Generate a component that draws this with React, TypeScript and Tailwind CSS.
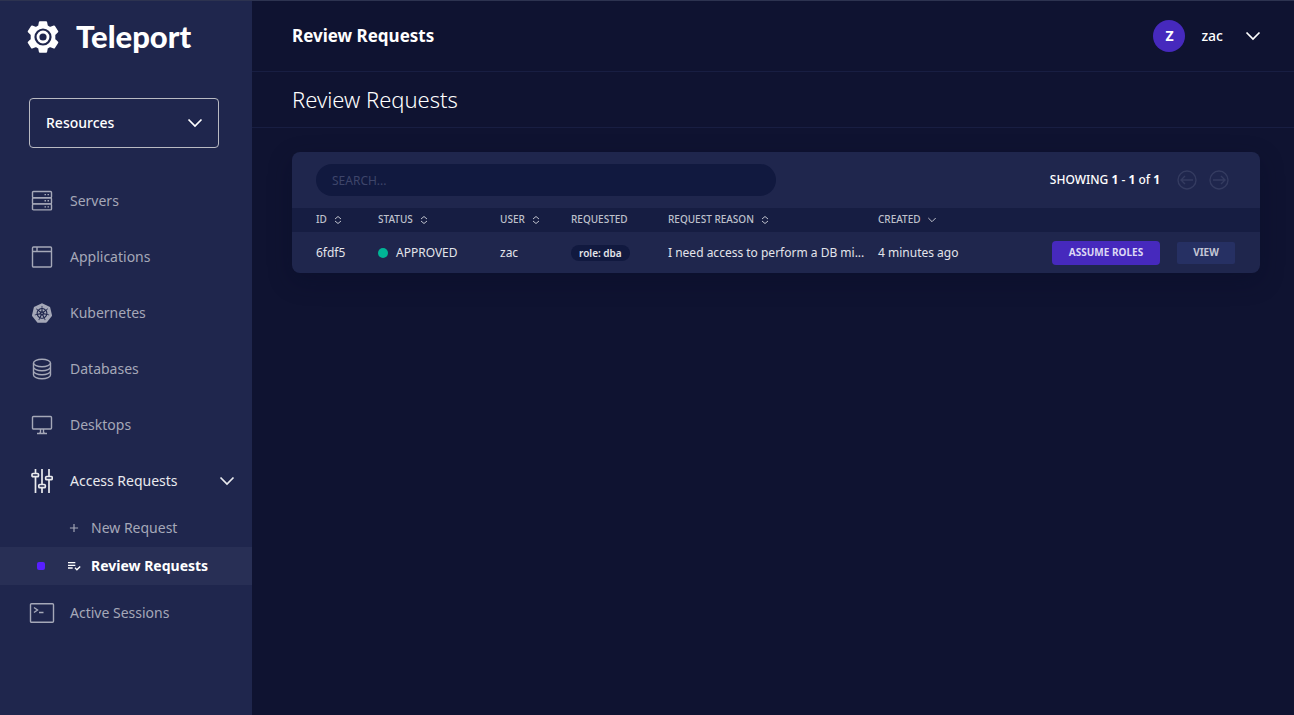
import type { ReactNode, SVGProps } from "react";
import { SiKubernetes } from "react-icons/si";
import { MdPlaylistAddCheck, MdAdd } from "react-icons/md";

function Line({ children, ...props }: SVGProps<SVGSVGElement> & { children: ReactNode }) {
  return (
    <svg fill="none" stroke="currentColor" strokeWidth="1.4" aria-hidden="true" {...props}>
      {children}
    </svg>
  );
}

function Logo() {
  return (
    <svg width="34" height="34" viewBox="0 0 34 34" aria-hidden="true">
      <path
        d="M13.9 2.200h6.200l.8 4 3.200 1.800 4-1.600 3.200 5.200-3 3v4.800l3 3-3.200 5.200-4-1.600-3.200 1.800-.8 4h-6.200l-.8-4-3.200-1.800-4 1.600-3.200-5.200 3-3v-4.800l-3-3 3.200-5.200 4 1.600 3.200-1.800z"
        fill="#fff"
        stroke="#fff"
        strokeWidth="2"
        strokeLinejoin="round"
      />
      <circle cx="17" cy="17" r="8.600" fill="#1f264d" />
      <circle cx="17" cy="17" r="5" fill="none" stroke="#fff" strokeWidth="2.800" />
    </svg>
  );
}

function Chevron({ className }: { className?: string }) {
  return (
    <Line width="16" height="16" viewBox="0 0 16 16" strokeWidth="1.7" className={className}>
      <path d="M1.5 4.5 8 11l6.500-6.500" />
    </Line>
  );
}

function ServersIcon() {
  return (
    <Line width="22" height="22" viewBox="0 0 22 22">
      <rect x="1.500" y="1.500" width="19" height="6.200" rx="1" />
      <rect x="1.500" y="7.700" width="19" height="6.200" rx="1" />
      <rect x="1.500" y="13.900" width="19" height="6" rx="1" />
      <path d="M13.500 4.600H15M16.500 4.600H18M13.500 10.800H15M16.500 10.800H18M13.500 16.900H15M16.500 16.900H18" />
    </Line>
  );
}

function ApplicationsIcon() {
  return (
    <Line width="22" height="22" viewBox="0 0 22 22">
      <rect x="1.500" y="1" width="19" height="20" rx="1" />
      <path d="M1.500 5.500h19M6 1v4.500" />
    </Line>
  );
}

function DatabasesIcon() {
  return (
    <Line width="22" height="22" viewBox="0 0 22 22">
      <ellipse cx="11" cy="5" rx="8.500" ry="3.800" />
      <path d="M2.500 5v12c0 2.100 3.800 3.800 8.500 3.800s8.500-1.700 8.500-3.800V5M2.500 9c0 2.100 3.800 3.800 8.500 3.800s8.500-1.700 8.500-3.800M2.500 13c0 2.100 3.800 3.800 8.500 3.800s8.500-1.700 8.500-3.800" />
    </Line>
  );
}

function DesktopsIcon() {
  return (
    <Line width="22" height="22" viewBox="0 0 22 22">
      <rect x="1.500" y="2.500" width="19" height="12.500" rx="1" />
      <path d="M9.500 15v3.200L8.500 19.500M12.500 15v3.200l1 1.300M6 19.500h10" />
    </Line>
  );
}

function SlidersIcon() {
  return (
    <Line width="22" height="26" viewBox="0 0 22 26" strokeWidth="1.700">
      <path d="M4.500 1v4.500M4.500 9v16M11 1v15.500M11 20v5M18 1v7.500M18 12v13" />
      <rect x="1" y="5.500" width="6.500" height="3.200" rx="1" />
      <rect x="7.800" y="16.500" width="6.500" height="3.200" rx="1" />
      <rect x="14.700" y="8.500" width="6.500" height="3.200" rx="1" />
    </Line>
  );
}

function SessionsIcon() {
  return (
    <Line width="26" height="22" viewBox="0 0 26 22">
      <rect x="1.500" y="1.800" width="23" height="18.500" rx="1" />
      <path d="m5 5.500 3.500 2.500L5 10.500M10 10.500h4.500" />
    </Line>
  );
}

function SortIcon() {
  return (
    <Line width="8" height="8" viewBox="0 0 8 8" strokeWidth="1">
      <path d="M1 3 4 .5 7 3M1 5l3 2.500L7 5" />
    </Line>
  );
}

function NavItem({ icon, label, active }: { icon: ReactNode; label: string; active?: boolean }) {
  return (
    <a
      href="#"
      className={`flex h-14 items-center pl-7 pr-[17px] text-sm ${active ? "text-[#e9eaee]" : "text-[#a5a8b8]"}`}
    >
      <span className="flex w-7 shrink-0 justify-center">{icon}</span>
      <span className="ml-3.5 flex-1">{label}</span>
      {active && <Chevron />}
    </a>
  );
}

function Sidebar() {
  return (
    <aside className="flex w-[252px] shrink-0 flex-col bg-[#1f264d]">
      <a
        href="#"
        className="flex h-[71px] items-center gap-4 pl-[26px] font-['Lato',sans-serif] text-[31px] font-black text-white"
      >
        <Logo />
        <span>Teleport</span>
      </a>
      <div className="relative mt-[26px] mb-[25px] ml-[29px] mr-[33px]">
        <select
          aria-label="Category"
          className="block h-[50px] w-full appearance-none rounded border border-[#b9bac2] bg-transparent px-4 text-sm font-medium text-white"
        >
          <option>Resources</option>
        </select>
        <Chevron className="pointer-events-none absolute right-4 top-[17px] text-white" />
      </div>
      <nav>
        <NavItem icon={<ServersIcon />} label="Servers" />
        <NavItem icon={<ApplicationsIcon />} label="Applications" />
        <NavItem icon={<SiKubernetes size={20} />} label="Kubernetes" />
        <NavItem icon={<DatabasesIcon />} label="Databases" />
        <NavItem icon={<DesktopsIcon />} label="Desktops" />
        <NavItem icon={<SlidersIcon />} label="Access Requests" active />
        <a href="#" className="flex h-[38px] items-center pl-[67px] text-sm text-[#a5a8b8]">
          <MdAdd size={14} />
          <span className="ml-2.5">New Request</span>
        </a>
        <a href="#" className="flex h-[38px] items-center bg-[#282f55] pl-[37px] text-sm font-bold text-white">
          <span className="size-2 rounded-xs bg-[#581fff]" />
          <MdPlaylistAddCheck size={16} className="ml-[21px]" />
          <span className="ml-[9px]">Review Requests</span>
        </a>
        <NavItem icon={<SessionsIcon />} label="Active Sessions" />
      </nav>
    </aside>
  );
}

function Th({ label, icon, first }: { label?: string; icon?: ReactNode; first?: boolean }) {
  return (
    <th scope="col" className={`h-6 p-0 pr-2 text-left font-medium ${first ? "pl-6" : "pl-2"}`}>
      <span className="flex items-center gap-[7px]">
        {label}
        {icon}
      </span>
    </th>
  );
}

function RequestsTable() {
  return (
    <section className="overflow-hidden rounded-lg bg-[#1f264d] shadow-[0_8px_24px_rgba(8,11,36,0.3)]">
      <div className="flex h-14 items-center pl-6 pr-[31px]">
        <input
          type="search"
          aria-label="Search"
          placeholder="SEARCH..."
          className="h-8 w-[460px] rounded-full bg-[#11193f] px-4 text-xs text-white outline-none placeholder:text-[#3e456a]"
        />
        <p className="ml-auto mr-[17px] text-xs font-medium text-white">
          SHOWING <b>1</b> - <b>1</b> of <b>1</b>
        </p>
        <div className="flex gap-3 text-[#343b60]">
          <button type="button" aria-label="Previous page">
            <Line width="20" height="20" viewBox="0 0 20 20">
              <circle cx="10" cy="10" r="9" />
              <path d="M16 10H4.500M8 6l-4 4 4 4" />
            </Line>
          </button>
          <button type="button" aria-label="Next page">
            <Line width="20" height="20" viewBox="0 0 20 20">
              <circle cx="10" cy="10" r="9" />
              <path d="M4 10h11.500M12 6l4 4-4 4" />
            </Line>
          </button>
        </div>
      </div>
      <table className="w-full table-fixed text-xs text-[#e3e4ea]">
        <colgroup>
          <col className="w-[78px]" />
          <col className="w-[122px]" />
          <col className="w-[71px]" />
          <col className="w-[97px]" />
          <col className="w-[210px]" />
          <col className="w-[120px]" />
          <col />
        </colgroup>
        <thead className="bg-[#161d42] text-[10px] text-[#bfc1cc]">
          <tr>
            <Th label="ID" icon={<SortIcon />} first />
            <Th label="STATUS" icon={<SortIcon />} />
            <Th label="USER" icon={<SortIcon />} />
            <Th label="REQUESTED" />
            <Th label="REQUEST REASON" icon={<SortIcon />} />
            <Th
              label="CREATED"
              icon={
                <Line width="8" height="8" viewBox="0 0 8 8" strokeWidth="1">
                  <path d="m.3 2 3.700 3.700L7.700 2" />
                </Line>
              }
            />
            <th scope="col" aria-label="Actions" />
          </tr>
        </thead>
        <tbody>
          <tr className="h-[41px] whitespace-nowrap">
            <td className="pl-6">6fdf5</td>
            <td className="px-2">
              <span className="flex items-center gap-2">
                <span className="size-2.5 rounded-full bg-[#00b596]" />
                APPROVED
              </span>
            </td>
            <td className="px-2">zac</td>
            <td className="px-2">
              <span className="inline-block rounded-full bg-[#11193f] px-2 text-[10px] leading-4 font-semibold">
                role: dba
              </span>
            </td>
            <td className="pl-2">I need access to perform a DB mi...</td>
            <td className="pl-2">4 minutes ago</td>
            <td className="pr-[25px]">
              <div className="flex items-center justify-end gap-[17px] text-[10px] font-bold">
                <button type="button" className="h-6 w-[108px] rounded bg-[#4629bd] text-[#dcd8f4]">
                  ASSUME ROLES
                </button>
                <button type="button" className="h-[22px] w-[58px] rounded-xs bg-[#263063] text-[#c3c6d5]">
                  VIEW
                </button>
              </div>
            </td>
          </tr>
        </tbody>
      </table>
    </section>
  );
}

export default function App() {
  return (
    <div className="flex min-h-screen border-t border-[#2d3350] bg-[#0f1331] font-['Noto_Sans',sans-serif]">
      <Sidebar />
      <main className="min-w-0 flex-1">
        <header className="flex h-[71px] items-center border-b border-[#181e42] pl-10 pr-[33px] text-white">
          <span className="text-[17px] font-bold">Review Requests</span>
          <button type="button" className="ml-auto flex items-center text-sm font-medium">
            <span className="flex size-8 items-center justify-center rounded-full bg-[#4629bd] font-bold">Z</span>
            <span className="ml-4 mr-[22px]">zac</span>
            <Chevron />
          </button>
        </header>
        <div className="flex h-14 items-center border-b border-[#181e42] pl-10">
          <h1 className="text-[22px] font-light text-white">Review Requests</h1>
        </div>
        <div className="pt-6 pl-10 pr-[34px]">
          <RequestsTable />
        </div>
      </main>
    </div>
  );
}
